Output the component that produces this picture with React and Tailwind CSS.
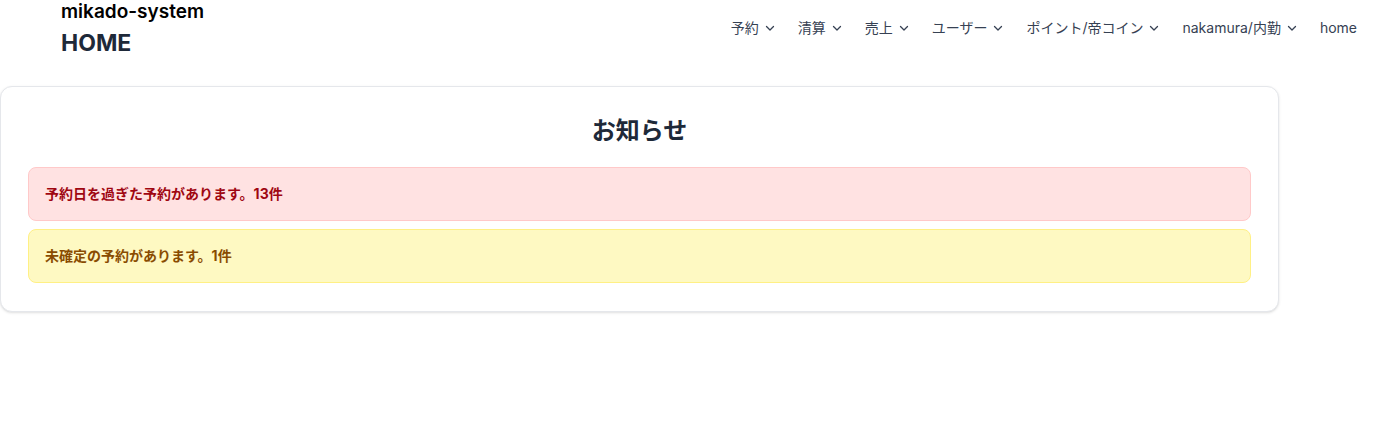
import React from "react";

const NavItem = ({ label, dropdown = true }) => (
    <div className="flex items-center gap-[6px] text-[14px] text-gray-700">
        <span>{label}</span>
        {dropdown && (
            <svg
                width="10"
                height="10"
                viewBox="0 0 10 10"
                fill="none"
                stroke="currentColor"
                strokeWidth="1.3"
                strokeLinecap="round"
                strokeLinejoin="round"
            >
                <path d="M1.5 3.5 5 7l3.5-3.5" />
            </svg>
        )}
    </div>
);

const App = () => {
    const navItems = ["予約", "清算", "売上", "ユーザー", "ポイント/帝コイン", "nakamura/内勤"];

    return (
        <div
            className="min-h-[435px] bg-white"
            style={{ fontFamily: '"Inter", "Noto Sans CJK JP", sans-serif' }}
        >
            <header className="flex items-start justify-between pl-[61px] pr-8 h-[86px]">
                <div className="flex flex-col">
                    <div className="text-[19px] font-semibold leading-6 text-black">
                        mikado-system
                    </div>
                    <h1 className="text-[23px] font-bold leading-8 mt-[3px] text-gray-800">
                        HOME
                    </h1>
                </div>
                <nav className="flex items-center gap-[23px] h-[55px]">
                    {navItems.map((item) => (
                        <NavItem key={item} label={item} />
                    ))}
                    <NavItem label="home" dropdown={false} />
                </nav>
            </header>

            <div className="w-[1279px] rounded-xl border border-gray-200 bg-white shadow-sm px-[27px] pt-7 pb-7">
                <h2 className="text-center text-2xl font-bold leading-8 text-gray-800 mb-5">
                    お知らせ
                </h2>
                <div className="flex flex-col gap-2">
                    <div className="rounded-lg border border-red-200 bg-red-100 px-4 py-4 text-sm font-bold leading-5 text-red-800">
                        予約日を過ぎた予約があります。13件
                    </div>
                    <div className="rounded-lg border border-yellow-200 bg-yellow-100 px-4 py-4 text-sm font-bold leading-5 text-yellow-800">
                        未確定の予約があります。1件
                    </div>
                </div>
            </div>
        </div>
    );
};

export default App;
